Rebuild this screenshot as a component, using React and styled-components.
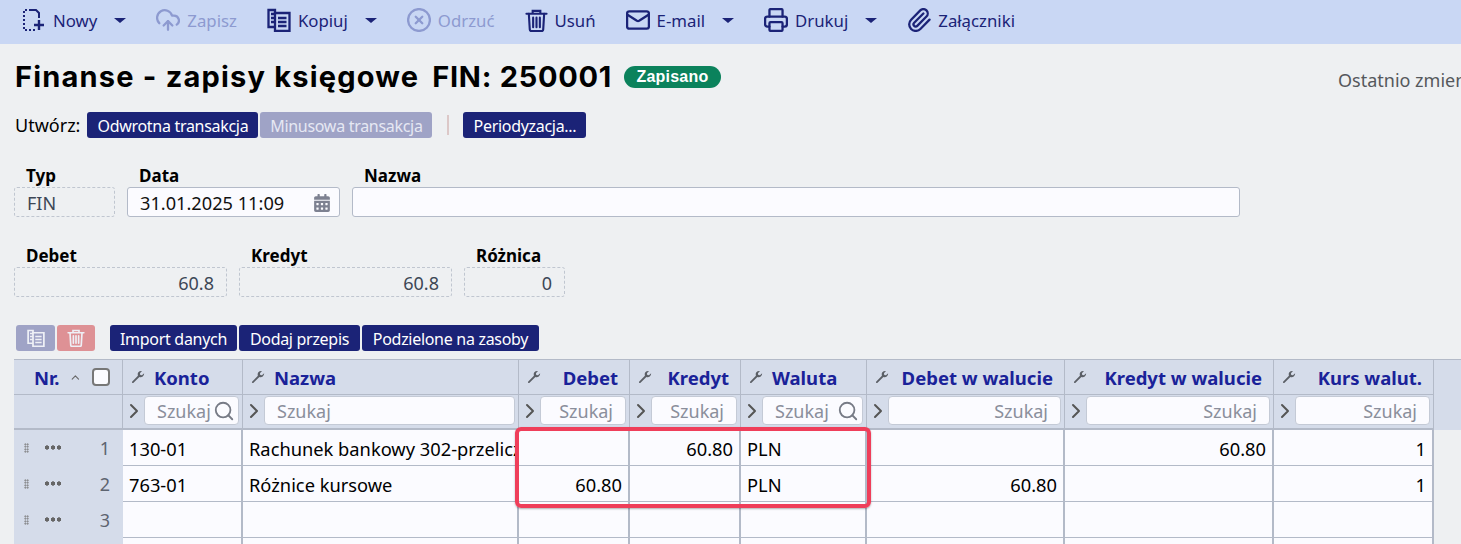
import React from 'react'
import styled, { createGlobalStyle } from 'styled-components'
import { CloudUpload, CircleX, Mail, Printer, Paperclip, Search, ChevronRight, ChevronUp } from 'lucide-react'
import { FaCalendarAlt } from 'react-icons/fa'

const GlobalStyle = createGlobalStyle`
  html, body {
    margin: 0;
    height: 544px;
    overflow: hidden;
    background: #eef0f2;
    font-family: "Noto Sans", "Open Sans", sans-serif;
  }
`

// lucide icons leave a margin inside their box, the crop makes them as large as in the toolbar of the app
const tight = { size: 24, viewBox: '1 1 22 22', strokeWidth: 2.1 }

const NewIcon = () => (
  <svg width="24" height="24" viewBox="0 0 24 24" fill="none" stroke="currentColor" strokeWidth="2">
    <path d="M9 2H2v20h11" strokeDasharray="2 2" />
    <path d="M9 2h5l3 3v5" />
    <path d="M17 12v10M12 17h10" strokeWidth="2.4" />
  </svg>
)

const CopyIcon = ({ size = 24 }) => (
  <svg width={size} height={size} viewBox="0 0 24 24" fill="none" stroke="currentColor" strokeWidth="2.3">
    <path d="M8 5V2H1.5v17H8" />
    <path d="M4 6h4M4 10h4M4 14h4" />
    <path d="M8 5h14.5v18H8z" />
    <path d="M11 10h8.5M11 14h8.5M11 18h8.5" />
  </svg>
)

const TrashIcon = ({ size = 23 }) => (
  <svg width={size} height={size} viewBox="0 0 24 24" fill="none" stroke="currentColor" strokeWidth="2.2" strokeLinecap="round">
    <path d="M1.5 5h21M8 5V2h8v3" />
    <path d="M4 5l1 16.5a1.5 1.5 0 0 0 1.5 1.5h11a1.5 1.5 0 0 0 1.5-1.5L20 5" />
    <path d="M8.5 9v10M12 9v10M15.5 9v10" />
  </svg>
)

const WrenchIcon = () => (
  <svg width="14" height="14" viewBox="0 0 13 13" fill="currentColor">
    <path d="M1 10.9l5.4-5.6a3.4 3.4 0 0 1 .4-3.1A3.5 3.5 0 0 1 10.2 1L8.3 3l.3 1.6 1.6.3 2-1.9a3.5 3.5 0 0 1-1.3 3 3.4 3.4 0 0 1-3.1.4L2.1 12a.8.8 0 0 1-1.1-1.1z" />
  </svg>
)

const Page = styled.div`
  width: 1461px;
  height: 544px;
  overflow: hidden;
  position: relative;
  color: #000;
`

const Toolbar = styled.div`
  box-sizing: border-box;
  height: 44px;
  background: #c9d7f4;
  display: flex;
  align-items: center;
  gap: 30px;
  padding: 0 0 4px 22px;
`

const ToolItem = styled.div`
  display: flex;
  align-items: center;
  gap: 7px;
  font-size: 16.8px;
  color: ${p => (p.$disabled ? '#8d9ad0' : '#1b2377')};
`

const Caret = styled.span`
  width: 0;
  height: 0;
  margin-left: 10px;
  border-left: 6px solid transparent;
  border-right: 6px solid transparent;
  border-top: 5px solid #1b2377;
`

const TitleRow = styled.div`
  height: 44px;
  margin-top: 11px;
  padding-left: 15px;
  display: flex;
  align-items: center;
`

const Title = styled.h1`
  margin: -2px 0 0;
  font-family: Inter, sans-serif;
  font-size: 29px;
  font-weight: 700;
  letter-spacing: 1.2px;
  white-space: nowrap;
`

const DocNumber = styled.span`
  margin-left: 13px;
  letter-spacing: 0.72px;
`

const Badge = styled.span`
  margin-left: 12px;
  width: 97px;
  height: 22px;
  border-radius: 11px;
  background: #0b825c;
  color: #fff;
  font-family: "Liberation Sans", sans-serif;
  font-size: 16px;
  font-weight: 700;
  letter-spacing: 0.2px;
  text-align: center;
  line-height: 21px;
`

const LastChanged = styled.span`
  margin-left: auto;
  width: 123px;
  padding-top: 6px;
  color: #55585c;
  font-size: 18px;
  white-space: nowrap;
  overflow: hidden;
`

const ActionRow = styled.div`
  display: flex;
  align-items: center;
  gap: 2px;
  margin-top: 13px;
  padding-left: 15px;
`

const ActionLabel = styled.span`
  font-size: 18px;
  margin-right: 5px;
`

const NavyButton = styled.button`
  height: 26px;
  padding: 1px 0 0;
  width: ${p => p.$w}px;
  border: 0;
  border-radius: 3px;
  background: ${p => (p.$faded ? '#9fa3c6' : '#1b2377')};
  color: ${p => (p.$faded ? '#e6e8f3' : '#fff')};
  font-family: inherit;
  font-size: 16px;
  letter-spacing: -0.3px;
  white-space: nowrap;
`

const Separator = styled.span`
  width: 2px;
  height: 20px;
  background: #dcc8c8;
  margin: 0 12px 0 13px;
`

const FormRow = styled.div`
  display: flex;
  gap: 12px;
  padding-left: 14px;
  margin-top: ${p => p.$top}px;
`

const Field = styled.div`
  width: ${p => p.$w}px;
`

const FieldLabel = styled.div`
  height: 21px;
  line-height: 19px;
  padding-left: 12px;
  font-size: 17px;
  font-weight: 700;
`

const ReadOnlyBox = styled.div`
  box-sizing: border-box;
  height: 30px;
  line-height: 30px;
  padding: 0 12px;
  border: 1px dashed #c0c6d0;
  border-radius: 3px;
  font-size: 18px;
  color: #3d4756;
  text-align: ${p => (p.$right ? 'right' : 'left')};
`

const InputBox = styled.div`
  box-sizing: border-box;
  height: 30px;
  padding: 1px 12px 0;
  border: 1px solid #b3bac8;
  border-radius: 3px;
  background: #fbfbff;
  font-size: 18.2px;
  display: flex;
  align-items: center;
  justify-content: space-between;
  color: #111;
`

const CalendarGlyph = styled(FaCalendarAlt)`
  color: #7d8191;
  font-size: 18px;
  margin-right: -4px;
`

const TableTools = styled.div`
  display: flex;
  gap: 2px;
  margin-top: 28px;
  padding-left: 16px;
`

const IconButton = styled.button`
  width: ${p => p.$w}px;
  height: 26px;
  padding: 0;
  border: 0;
  border-radius: 3px;
  background: ${p => (p.$danger ? '#de9195' : '#9fa3c6')};
  color: #eef0f6;
  display: flex;
  align-items: center;
  justify-content: center;
  margin-right: ${p => p.$gapRight || 0}px;
`

const columns = '109px 120px 276px 111px 111px 126px 198px 209px 160px'

const TableHead = styled.div`
  margin: 8px 0 0 14px;
  background: #d5dcea;
  border-top: 1px solid #b3bac8;
`

const HeadRow = styled.div`
  display: grid;
  grid-template-columns: ${columns};
  height: ${p => p.$h}px;
  box-sizing: border-box;
`

const HeadCell = styled.div`
  box-sizing: border-box;
  border-right: 1px solid #b3bac8;
  border-bottom: 1px solid #b3bac8;
  padding: 0 11px 0 8px;
  display: flex;
  align-items: center;
  gap: 9px;
  color: #1a2299;
  font-size: 18.5px;
  font-weight: 700;
  white-space: nowrap;
`

const WrenchSlot = styled.span`
  color: #5b5f66;
  display: flex;
  margin-right: ${p => (p.$right ? 'auto' : '0')};
`

const NrCell = styled(HeadCell)`
  padding: 0 12px 0 20px;
  gap: 9px;
`

const SortMark = styled(ChevronUp)`
  color: #666;
`

const HeadCheck = styled.span`
  width: 18px;
  height: 18px;
  box-sizing: border-box;
  border: 2px solid #777;
  border-radius: 4px;
  background: #fbfbff;
  margin-left: 2px;
`

const FilterCell = styled.div`
  box-sizing: border-box;
  border-right: 1px solid #b3bac8;
  border-bottom: 2px solid #b3bac8;
  padding: 1px 3px 0 5px;
  display: flex;
  align-items: flex-start;
  gap: 4px;
  color: #555;
`

const ChevronSlot = styled(ChevronRight)`
  margin-top: 7px;
  flex: none;
`

const FilterInput = styled.div`
  flex: 1;
  min-width: 0;
  box-sizing: border-box;
  height: 29px;
  border: 1px solid #c4cad6;
  border-radius: 4px;
  background: #fbfbff;
  padding: 0 ${p => (p.$right ? '12px' : '3px')} 0 12px;
  display: flex;
  align-items: center;
  justify-content: ${p => (p.$right ? 'flex-end' : 'flex-start')};
  color: #8a8e9b;
  font-size: 18px;
  overflow: hidden;
`

const Placeholder = styled.span`
  overflow: hidden;
  white-space: nowrap;
  flex: ${p => (p.$icon ? '1' : 'none')};
`

const SearchGlyph = styled(Search)`
  flex: none;
  color: #777b86;
`

const DataRow = styled.div`
  display: grid;
  grid-template-columns: ${columns};
  width: 1420px;
  margin-left: 14px;
  height: 36px;
`

const RowHead = styled.div`
  box-sizing: border-box;
  background: #d5dcea;
  border-bottom: 1px solid #d5dcea;
  padding: 0 13px 0 10px;
  display: flex;
  align-items: center;
  color: #5d6470;
  font-size: 18px;
`

const Grip = styled.span`
  width: 5px;
  height: 10px;
  background-image: radial-gradient(#777 0.8px, transparent 0.9px);
  background-size: 2.5px 2.5px;
`

const Dots = styled.span`
  margin-left: 15px;
  width: 18px;
  height: 5px;
  background-image: radial-gradient(circle, #666 2px, transparent 2.2px);
  background-size: 6px 5px;
`

const RowNumber = styled.span`
  margin-left: auto;
`

const Cell = styled.div`
  box-sizing: border-box;
  background: #fbfbff;
  border-right: 2px solid #b3bac8;
  border-bottom: 1px solid #b3bac8;
  padding: 0 6px;
  line-height: 38px;
  font-size: 18.3px;
  white-space: nowrap;
  overflow: hidden;
  text-align: ${p => (p.$right ? 'right' : 'left')};
`

const Highlight = styled.div`
  position: absolute;
  left: 515px;
  top: 427px;
  width: 356px;
  height: 81px;
  box-sizing: border-box;
  border: 4px solid #ef3e5a;
  border-radius: 6px;
  box-shadow: 0 1px 2px rgba(0, 0, 0, 0.3);
  pointer-events: none;
`

const headers = [
  { label: 'Konto' },
  { label: 'Nazwa' },
  { label: 'Debet', right: true },
  { label: 'Kredyt', right: true },
  { label: 'Waluta' },
  { label: 'Debet w walucie', right: true },
  { label: 'Kredyt w walucie', right: true },
  { label: 'Kurs walut.', right: true },
]

const filters = [
  { search: true },
  {},
  { right: true },
  { right: true },
  { search: true },
  { right: true },
  { right: true },
  { right: true },
]

const aligned = [false, false, true, true, false, true, true, true]

const rows = [
  { nr: 1, cells: ['130-01', 'Rachunek bankowy 302-przeliczeniowy', '', '60.80', 'PLN', '', '60.80', '1'] },
  { nr: 2, cells: ['763-01', 'Różnice kursowe', '60.80', '', 'PLN', '60.80', '', '1'] },
  { nr: 3, cells: ['', '', '', '', '', '', '', ''] },
  { nr: '', cells: ['', '', '', '', '', '', '', ''] },
]

export default function App() {
  return (
    <Page>
      <GlobalStyle />
      <Toolbar>
        <ToolItem><NewIcon />Nowy<Caret /></ToolItem>
        <ToolItem $disabled><CloudUpload {...tight} />Zapisz</ToolItem>
        <ToolItem><CopyIcon />Kopiuj<Caret /></ToolItem>
        <ToolItem $disabled><CircleX {...tight} />Odrzuć</ToolItem>
        <ToolItem><TrashIcon />Usuń</ToolItem>
        <ToolItem><Mail {...tight} />E-mail<Caret /></ToolItem>
        <ToolItem><Printer {...tight} />Drukuj<Caret /></ToolItem>
        <ToolItem><Paperclip {...tight} />Załączniki</ToolItem>
      </Toolbar>

      <TitleRow>
        <Title>Finanse - zapisy księgowe<DocNumber>FIN: 250001</DocNumber></Title>
        <Badge>Zapisano</Badge>
        <LastChanged>Ostatnio zmieniono</LastChanged>
      </TitleRow>

      <ActionRow>
        <ActionLabel>Utwórz:</ActionLabel>
        <NavyButton $w={171}>Odwrotna transakcja</NavyButton>
        <NavyButton $w={172} $faded>Minusowa transakcja</NavyButton>
        <Separator />
        <NavyButton $w={123}>Periodyzacja...</NavyButton>
      </ActionRow>

      <FormRow $top={28}>
        <Field $w={101}>
          <FieldLabel>Typ</FieldLabel>
          <ReadOnlyBox>FIN</ReadOnlyBox>
        </Field>
        <Field $w={213}>
          <FieldLabel>Data</FieldLabel>
          <InputBox>31.01.2025 11:09<CalendarGlyph /></InputBox>
        </Field>
        <Field $w={888}>
          <FieldLabel>Nazwa</FieldLabel>
          <InputBox />
        </Field>
      </FormRow>

      <FormRow $top={29}>
        <Field $w={213}>
          <FieldLabel>Debet</FieldLabel>
          <ReadOnlyBox $right>60.8</ReadOnlyBox>
        </Field>
        <Field $w={213}>
          <FieldLabel>Kredyt</FieldLabel>
          <ReadOnlyBox $right>60.8</ReadOnlyBox>
        </Field>
        <Field $w={101}>
          <FieldLabel>Różnica</FieldLabel>
          <ReadOnlyBox $right>0</ReadOnlyBox>
        </Field>
      </FormRow>

      <TableTools>
        <IconButton $w={39}><CopyIcon size={18} /></IconButton>
        <IconButton $w={38} $danger $gapRight={13}><TrashIcon size={18} /></IconButton>
        <NavyButton $w={127}>Import danych</NavyButton>
        <NavyButton $w={121}>Dodaj przepis</NavyButton>
        <NavyButton $w={177}>Podzielone na zasoby</NavyButton>
      </TableTools>

      <TableHead>
        <HeadRow $h={35}>
          <NrCell>
            Nr.
            <SortMark size={13} />
            <HeadCheck />
          </NrCell>
          {headers.map(h => (
            <HeadCell key={h.label}>
              <WrenchSlot $right={h.right}><WrenchIcon /></WrenchSlot>
              {h.label}
            </HeadCell>
          ))}
        </HeadRow>
        <HeadRow $h={35}>
          <FilterCell />
          {filters.map((f, i) => (
            <FilterCell key={i}>
              <ChevronSlot width={12} height={16} viewBox="6 4 12 16" />
              <FilterInput $right={f.right}>
                <Placeholder $icon={f.search}>Szukaj</Placeholder>
                {f.search && <SearchGlyph size={22} />}
              </FilterInput>
            </FilterCell>
          ))}
        </HeadRow>
      </TableHead>

      {rows.map((r, i) => (
        <DataRow key={i}>
          <RowHead>
            <Grip />
            <Dots />
            <RowNumber>{r.nr}</RowNumber>
          </RowHead>
          {r.cells.map((c, j) => (
            <Cell key={j} $right={aligned[j]}>{c}</Cell>
          ))}
        </DataRow>
      ))}

      <Highlight />
    </Page>
  )
}
